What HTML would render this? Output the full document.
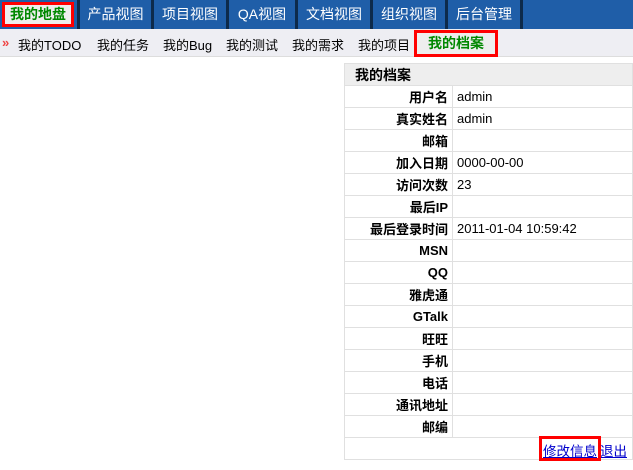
<!DOCTYPE html>
<html><head><meta charset="utf-8"><style>
*{margin:0;padding:0;box-sizing:border-box}
body{width:633px;height:470px;background:#fff;font-family:"Liberation Sans","Noto Sans CJK SC",sans-serif;font-size:13px;position:relative;overflow:hidden}
#nav{position:absolute;left:0;top:0;width:633px;height:29px;background:#1f5ea8}
.t{position:absolute;top:0;height:29px;color:#fff;font-size:14px;line-height:29px;text-align:center}
.sep{position:absolute;top:0;width:3px;height:29px;background:#0d2a4a}
#home{position:absolute;left:2px;top:2px;width:72px;height:25px;background:#eee;border:3px solid #f00;color:#080;font-weight:bold;font-size:14px;line-height:19px;text-align:center}
#sub{position:absolute;left:0;top:29px;width:633px;height:28px;background:#eeeef3;border-bottom:1px solid #ddd}
#sub span{position:absolute;top:6px;font-size:13px;color:#000}
#cur{position:absolute;left:414px;top:30px;width:84px;height:27px;border:3px solid #f00;background:#eee;color:#080;font-weight:bold;font-size:14px;line-height:21px;text-align:center}
table{position:absolute;left:344px;top:63px;width:289px;border-collapse:collapse}
td,th{border:1px solid #e0e0e0;height:22px;padding:0 4px}
th.h{background:#eee;text-align:left;font-weight:bold;padding-left:10px;font-size:14px}
td.l{width:108px;text-align:right;font-weight:bold}
a{color:#00c;text-decoration:underline}
#lk{position:absolute;left:543px;top:440px;font-size:13.5px;white-space:nowrap}
#edit{position:absolute;left:539px;top:436px;width:62px;height:25px;border:3px solid #f00}
</style></head><body>
<div id="nav">
<div id="home">我的地盘</div>
<div class="sep" style="left:77px"></div>
<div class="t" style="left:80px;width:71px">产品视图</div>
<div class="sep" style="left:151px"></div>
<div class="t" style="left:154px;width:72px">项目视图</div>
<div class="sep" style="left:226px"></div>
<div class="t" style="left:229px;width:66px">QA视图</div>
<div class="sep" style="left:295px"></div>
<div class="t" style="left:298px;width:72px">文档视图</div>
<div class="sep" style="left:370px"></div>
<div class="t" style="left:373px;width:72px">组织视图</div>
<div class="sep" style="left:445px"></div>
<div class="t" style="left:448px;width:72px">后台管理</div>
<div class="sep" style="left:520px"></div>
</div>
<div id="sub">
<span style="left:2px;color:#e44;font-weight:bold">»</span>
<span style="left:18px">我的TODO</span>
<span style="left:97px">我的任务</span>
<span style="left:163px">我的Bug</span>
<span style="left:226px">我的测试</span>
<span style="left:292px">我的需求</span>
<span style="left:358px">我的项目</span>
</div>
<div id="cur">我的档案</div>
<table>
<tr><th class="h" colspan="2">我的档案</th></tr>
<tr><td class="l">用户名</td><td>admin</td></tr>
<tr><td class="l">真实姓名</td><td>admin</td></tr>
<tr><td class="l">邮箱</td><td></td></tr>
<tr><td class="l">加入日期</td><td>0000-00-00</td></tr>
<tr><td class="l">访问次数</td><td>23</td></tr>
<tr><td class="l">最后IP</td><td></td></tr>
<tr><td class="l">最后登录时间</td><td>2011-01-04 10:59:42</td></tr>
<tr><td class="l">MSN</td><td></td></tr>
<tr><td class="l">QQ</td><td></td></tr>
<tr><td class="l">雅虎通</td><td></td></tr>
<tr><td class="l">GTalk</td><td></td></tr>
<tr><td class="l">旺旺</td><td></td></tr>
<tr><td class="l">手机</td><td></td></tr>
<tr><td class="l">电话</td><td></td></tr>
<tr><td class="l">通讯地址</td><td></td></tr>
<tr><td class="l">邮编</td><td></td></tr>
<tr><td colspan="2"></td></tr>
</table>
<div id="lk"><a>修改信息</a><a style="margin-left:3px">退出</a></div>
<div id="edit"></div>
</body></html>
